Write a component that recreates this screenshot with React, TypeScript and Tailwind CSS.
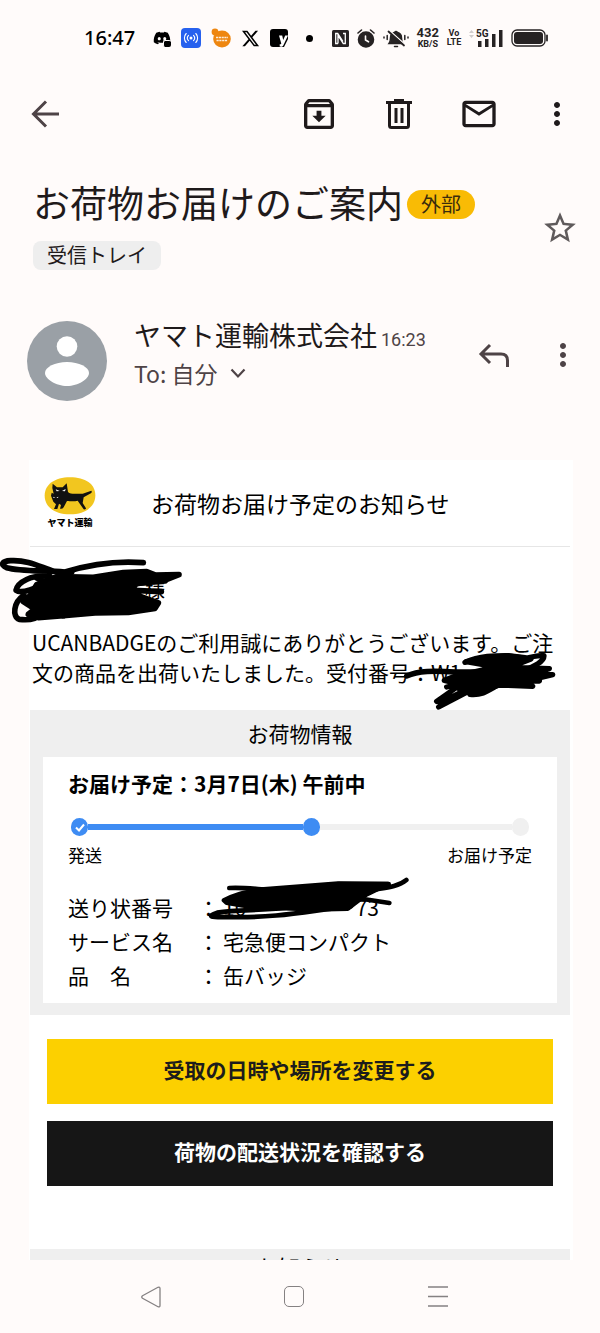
import { MdOutlineArchive, MdMailOutline, MdMoreVert, MdStarBorder } from "react-icons/md";
import { FaDiscord, FaXTwitter } from "react-icons/fa6";

const shipment = [
  { label: "サービス名", value: "宅急便コンパクト" },
  { label: "品　名", value: "缶バッジ" },
];

function StatusBar() {
  return (
    <div className="h-[76px] shrink-0 flex items-center justify-between pl-[84px] pr-[51px] text-black">
      <div className="flex items-center gap-[10px]">
        <span className="text-[20px] leading-6 font-medium font-['Noto_Sans'] mr-2">16:47</span>
        <span className="relative">
          <FaDiscord className="w-[18px] h-[18px]" />
          <span className="absolute right-0 bottom-0 w-2 h-[7px] bg-black border-l border-t border-[#fffbfa] rounded-[2px]" />
        </span>
        <svg className="w-5 h-5" viewBox="0 0 20 20" fill="none" stroke="#fff" strokeLinecap="round">
          <rect width="20" height="20" rx="4" fill="#2761ee" stroke="none" />
          <circle cx="10" cy="10" r="1.5" fill="#fff" stroke="none" />
          <path d="M7.5 7.3a4 4 0 0 0 0 5.4M12.5 7.3a4 4 0 0 1 0 5.4M5.2 5.5a6.5 6.5 0 0 0 0 9M14.8 5.5a6.5 6.5 0 0 1 0 9" strokeWidth="1.1" />
        </svg>
        <svg className="w-5 h-5" viewBox="0 0 20 20" fill="#ee8610">
          <circle cx="4" cy="4" r="3.4" />
          <ellipse cx="11" cy="11" rx="8.8" ry="8.4" />
          <path d="M5 9.5h12M5.500 12.500h11" stroke="#fff" strokeWidth="1.5" strokeDasharray="2.200 .6" fill="none" opacity=".85" />
        </svg>
        <FaXTwitter className="w-[19px] h-[19px]" />
        <svg className="w-[18px] h-[18px]" viewBox="0 0 18 18">
          <path d="M3 0h12a3 3 0 0 1 3 3v7l-4 8H3a3 3 0 0 1-3-3V3a3 3 0 0 1 3-3z" />
          <path d="M9 6.500h3.200l1 4.500 2-4.500H18l-4.600 9.700c-.8 1.500-2 1.800-3.700 1.400v-2.400c1.200.2 1.600-.2 1.500-1z" fill="#fff" />
        </svg>
      </div>
      <span className="w-[7px] h-[7px] rounded-full bg-black" />
      <div className="flex items-center gap-2 text-[#262223]">
        <svg className="w-[17px] h-[17px]" viewBox="0 0 17 17">
          <rect width="17" height="17" rx="1.500" fill="currentColor" />
          <path d="M6 13.500H3.700V3.500h2l5.300 8M11 3.500h2.300v10h-2L6 5.500v8" fill="none" stroke="#fff" strokeWidth="1.300" />
        </svg>
        <svg className="w-[18px] h-[19px]" viewBox="0 0 18 19" fill="none" stroke="currentColor" strokeWidth="1.600" strokeLinecap="round">
          <circle cx="9" cy="10.500" r="7.500" fill="currentColor" />
          <path d="M1 4l3.500-3M17 4l-3.500-3" />
          <path d="M8.500 7v4l3 1.800" stroke="#fffbfa" />
        </svg>
        <svg className="w-[26px] h-[19px]" viewBox="0 0 26 19" fill="none" stroke="currentColor" strokeWidth="1.500" strokeLinecap="round">
          <path d="M6 14.500c1.500-2 1.500-3 1.500-5.500 0-3 1.800-5 4.300-5.700a1.300 1.300 0 0 1 2.400 0C16.700 4 18.500 6 18.500 9c0 2.500 0 3.500 1.500 5.500z" fill="currentColor" />
          <path d="M11.500 17.500h3M4.200 6.500v4M1 8v1M21.800 6.500v4M25 8v1" />
          <path d="M7 2l14.500 13" stroke="#fffbfa" strokeWidth="1.500" />
          <path d="M5.500 2.500l15.500 14" strokeWidth="1.800" />
        </svg>
        <span className="flex flex-col items-center font-[Roboto] font-bold">
          <span className="text-[13px] leading-3">432</span>
          <span className="text-[9px] leading-[10px]">KB/S</span>
        </span>
        <span className="flex flex-col items-center font-[Roboto] font-bold text-[9px] leading-[9px] w-[14px]">
          <span>Vo</span>
          <span>LTE</span>
        </span>
        <svg className="w-[34px] h-5" viewBox="0 0 34 20" fill="currentColor">
          <path d="M0 5l2.500-3L5 5zM0 7l2.500 3L5 7z" fill="#d0cccc" />
          <text x="7" y="9" fontSize="10" fontWeight="700" fontFamily="Roboto">5G</text>
          <path d="M9 13h3.500v6H9zM16 11h3.500v8H16zM23 6h3.500v13H23zM30 2h3.500v17H30z" />
        </svg>
        <svg className="w-[38px] h-[18px]" viewBox="0 0 38 18">
          <rect x="1" y="1" width="33" height="16" rx="5" fill="none" stroke="currentColor" strokeWidth="1.300" />
          <rect x="3" y="3" width="29" height="12" rx="3" fill="currentColor" />
          <path d="M36 6.500v5" stroke="currentColor" strokeWidth="1.800" strokeLinecap="round" />
        </svg>
      </div>
    </div>
  );
}

function Toolbar() {
  return (
    <header className="h-[76px] shrink-0 flex items-center justify-between pl-[30px] pr-[25px] text-[#1f1a1b]">
      <button aria-label="戻る" className="text-[#4e4346]">
        <svg className="w-8 h-8" viewBox="0 0 32 32" fill="none" stroke="currentColor" strokeWidth="3">
          <path d="M29 16H4.500M16 3.500L3.500 16 16 28.500" />
        </svg>
      </button>
      <div className="flex items-center gap-10">
        <button aria-label="アーカイブ">
          <MdOutlineArchive className="w-10 h-10" />
        </button>
        <button aria-label="削除">
          <svg className="w-10 h-10" viewBox="0 0 40 40" fill="none" stroke="currentColor" strokeWidth="3">
            <path d="M7 8.500h26M15 6.500h10" />
            <path d="M10.500 9v22.500a2 2 0 0 0 2 2h15a2 2 0 0 0 2-2V9M17 14v15M23 14v15" />
          </svg>
        </button>
        <button aria-label="未読にする">
          <MdMailOutline className="w-10 h-10" />
        </button>
        <button aria-label="その他">
          <MdMoreVert className="w-9 h-10" />
        </button>
      </div>
    </header>
  );
}

function Subject() {
  return (
    <div className="flex items-center justify-between pt-[26px] pl-[33px] pr-[21px]">
      <div>
        <div className="flex items-center gap-1">
          <h1 className="text-[37px] leading-[48px] pb-1 text-[#1f1a1b]">お荷物お届けのご案内</h1>
          <span className="h-[29px] px-[14px] rounded-full bg-[#f9bb05] text-[20px] leading-[27px] text-[#3b2c0c]">外部</span>
        </div>
        <span className="mt-[11px] h-[29px] w-fit px-[14px] rounded-lg bg-[#eeeeee] text-[20px] leading-[27px] text-[#1f1a1b] block">受信トレイ</span>
      </div>
      <button aria-label="スター" className="text-[#5f5a5b] mt-[8px]">
        <MdStarBorder className="w-[38px] h-[38px]" />
      </button>
    </div>
  );
}

function Sender() {
  return (
    <div className="flex items-center pt-[46px] pl-[27px] pr-[19px]">
      <svg className="w-20 h-20 mt-[4px] shrink-0" viewBox="0 0 80 80">
        <circle cx="40" cy="40" r="40" fill="#9aa0a6" />
        <circle cx="40" cy="25.500" r="10.300" fill="#fff" />
        <path d="M18 52c0-6 10-11 22-11s22 5 22 11-11 13-22 13-22-7-22-13z" fill="#fff" />
      </svg>
      <div className="ml-[27px] mb-[10px] flex-1">
        <div className="flex items-baseline gap-1">
          <span className="text-[27px] leading-[38px] text-[#1f1a1b]">ヤマト運輸株式会社</span>
          <span className="text-[18px] text-[#4e4346] font-[Roboto]">16:23</span>
        </div>
        <button className="flex items-center gap-3 text-[23px] leading-[38px] text-[#4e4346]">
          To: 自分
          <svg className="w-4 h-4" viewBox="0 0 16 16" fill="none" stroke="currentColor" strokeWidth="2.200">
            <path d="M1.500 4.500L8 11.500l6.500-7" />
          </svg>
        </button>
      </div>
      <button aria-label="返信" className="text-[#4e4346] mb-[9px]">
        <svg className="w-8 h-8" viewBox="0 0 32 32" fill="none" stroke="currentColor" strokeWidth="3">
          <path d="M12 6L3 15l9 9M3.500 15H23q6.500 0 6.500 6.500V28" />
        </svg>
      </button>
      <button aria-label="メッセージのその他" className="text-[#4e4346] mb-[9px] ml-[35px]">
        <MdMoreVert className="w-9 h-10" />
      </button>
    </div>
  );
}

function YamatoLogo() {
  return (
    <div className="w-[52px] flex flex-col items-center">
      <svg className="w-[52px] h-[38px]" viewBox="0 0 156 114">
        <path d="M78 1c46 0 76 20 76 54s-30 57-76 57S2 89 2 56 32 1 78 1z" fill="#f2c61f" />
        <path d="M26 20l13 11h17l12-12 4 26c8 8 22 5 44 5l26-9q3 2 0 7l-23 13-3 17 10 16q1 4-7 3l-18-26c-12 4-24 1-32 1L59 91q-4 6-11 4l3-11-6-4-5 16H30l6-14-8-8-7-18 2-9 6 3-4-17z" fill="#111" />
        <path d="M35 37l12 5-9 1zM65 36l-11 6 9 1zM27 59l7 3-5 1zM43 59l-6 3 5 1z" fill="#fff" />
      </svg>
      <span className="mt-[2px] text-[9px] leading-3 font-black text-black">ヤマト運輸</span>
    </div>
  );
}

function NameScribble() {
  return (
    <svg className="absolute -left-[30px] top-0 w-[220px] h-[85px]" viewBox="0 0 660 255" fill="none" stroke="#000" strokeWidth="17" strokeLinecap="round" strokeLinejoin="round">
      <path d="M430 47C340 40 260 55 195 75 120 70 60 73 20 62 0 53 6 42 32 41c55-3 90 20 130 32" />
      <path d="M150 89C95 80 52 107 48 130c16 12 60-5 105-30M72 145C40 165 36 209 58 217c42 6 60-10 70-18" />
      <path d="M110 113L170 89l110 2 90-14 70-3 25 10 72-1-38 15-90 12-14 18 30 22 50 18-10 16-80 12-100 2-95 8-75 6-30-10 20-16-35-22 20-18z" fill="#000" />
      <path d="M110 93l40 18M400 130l84 4M190 202v4M215 75l-40 16M400 110l95-8" />
    </svg>
  );
}

function NumberScribble() {
  return (
    <svg className="absolute -top-[6px] left-[370px] w-[180px] h-[100px]" viewBox="0 0 540 300" fill="none" stroke="#000" strokeWidth="16" strokeLinecap="round" strokeLinejoin="round">
      <path d="M20 165c35-16 80-16 145-12h60M195 124c45-20 90-20 130-20l50 6M325 124c35 2 65-24 107-20 0 22-40 36-70 48" />
      <path d="M198 122l120-18 75 10-60 23-75-5zM165 166l120-28 75 2 88 3-40 12 50 6-50 12 10 7-70-4 50 20-100-4-60 20-50 2-30-30-25-6z" fill="#000" />
      <path d="M190 185l-80 56c15 4 60-18 90-38M116 258l105-55 80-15M140 198l80-18M210 220c40 4 60-15 85-28" />
    </svg>
  );
}

function SlipScribble() {
  return (
    <svg className="absolute -left-[18px] -top-[16px] w-[205px] h-[50px]" viewBox="495 20 615 150" fill="none" stroke="#000" strokeWidth="14" strokeLinecap="round" strokeLinejoin="round">
      <path d="M1099 38c-22 18-52 22-90 28M568 62c70-4 130 14 190 2l140-14h148" />
      <path d="M552 99c45-22 60-22 110-32l232-18 150 1-66 32-55 42-100 2-140-6-75-6-48-8z" fill="#000" />
      <path d="M780 116c-100 16-180 9-248 20-35 12-20 14 30 13 160 4 250-20 370-32M950 92l98 15" />
    </svg>
  );
}

function DeliveryInfo() {
  return (
    <section className="bg-[#efefef] px-[13px] pb-3 text-black">
      <h3 className="text-[21px] leading-[47px] text-center">お荷物情報</h3>
      <div className="bg-white px-[25px] pt-[11px] pb-[11px]">
        <p className="text-[21px] leading-[31px] font-bold">お届け予定：3月7日(木) 午前中</p>
        <div className="mt-[19px] flex items-center px-[3px]">
          <span className="w-[17px] h-[18px] rounded-full bg-[#3e8cf3] flex items-center justify-center">
            <svg className="w-3 h-3" viewBox="0 0 12 12" fill="none" stroke="#fff" strokeWidth="2">
              <path d="M2 6.500l3 3 5-6" />
            </svg>
          </span>
          <span className="h-[6px] flex-[215] bg-[#3e8cf3]" />
          <span className="w-[17px] h-[18px] rounded-full bg-[#3e8cf3]" />
          <span className="h-[6px] flex-[192] bg-[#f0f0f0]" />
          <span className="w-[17px] h-[18px] rounded-full bg-[#f0f0f0]" />
        </div>
        <div className="mt-1 flex justify-between text-[17px] leading-[30px]">
          <span>発送</span>
          <span>お届け予定</span>
        </div>
        <table className="mt-5 text-[21px] leading-[34px]">
          <tbody>
            <tr>
              <th className="w-[130px] p-0 text-left font-normal">送り状番号</th>
              <td className="w-[25px] p-0">：</td>
              <td className="p-0">
                <span className="relative flex justify-between w-[156px]">
                  <span>10</span>
                  <span>73</span>
                  <SlipScribble />
                </span>
              </td>
            </tr>
            {shipment.map((row) => (
              <tr key={row.label}>
                <th className="p-0 text-left font-normal">{row.label}</th>
                <td className="p-0">：</td>
                <td className="p-0">{row.value}</td>
              </tr>
            ))}
          </tbody>
        </table>
      </div>
    </section>
  );
}

function MailBody() {
  return (
    <article className="mt-[58px] ml-[29px] mr-[27px] pl-px pr-[3px] bg-white text-black">
      <div className="h-[87px] flex items-center border-b border-[#e6e6e6] pl-[14px]">
        <YamatoLogo />
        <h2 className="ml-[55px] text-[23px] leading-8">お荷物お届け予定のお知らせ</h2>
      </div>

      <div className="relative h-[84px] pt-[28px] pl-[115px] text-[20px] leading-[30px]">
        様
        <NameScribble />
      </div>

      <div className="relative h-[79px] text-[21px] leading-[30px] pl-[2px] -mt-[4px]">
        <p>UCANBADGEのご利用誠にありがとうございます。ご注文の商品を出荷いたしました。受付番号：W1</p>
        <NumberScribble />
      </div>

      <div className="mt-1">
        <DeliveryInfo />
      </div>

      <div className="flex flex-col gap-[17px] px-[17px] pt-6 pb-[63px] text-[21px] leading-[60px] font-bold text-center">
        <a href="#change" className="pb-[5px] bg-[#fcd000] text-[#1c1c1c]">受取の日時や場所を変更する</a>
        <a href="#status" className="pb-[5px] bg-[#161616] text-white">荷物の配送状況を確認する</a>
      </div>

      <section className="bg-[#efefef] pt-[3px]">
        <h3 className="text-[22px] leading-7 text-center">お知らせ</h3>
      </section>
    </article>
  );
}

function NavBar() {
  return (
    <nav className="h-[73px] shrink-0 grid grid-cols-3 items-center justify-items-center pl-[79px] pr-[90px] text-[#858182]">
      <button aria-label="戻る">
        <svg className="w-5 h-[22px]" viewBox="0 0 20 22" fill="none" stroke="currentColor" strokeWidth="1.300">
          <path d="M1.500 9.800L17 1.300q2-.8 2 1.200v17q0 2-2 1.200L1.500 12.200q-1.500-1.200 0-2.400z" />
        </svg>
      </button>
      <button aria-label="ホーム">
        <span className="block w-5 h-[21px] rounded-[5px] border border-[#858182]" />
      </button>
      <button aria-label="履歴">
        <svg className="w-5 h-[21px]" viewBox="0 0 20 21" stroke="currentColor" strokeWidth="1.300">
          <path d="M0 1h20M0 10.500h20M0 20h20" />
        </svg>
      </button>
    </nav>
  );
}

export default function App() {
  return (
    <div lang="ja" className="h-screen flex flex-col bg-[#fffbfa] font-['Noto_Sans_CJK_JP',sans-serif]">
      <StatusBar />
      <Toolbar />
      <main className="flex-1 min-h-0 overflow-hidden">
        <Subject />
        <Sender />
        <MailBody />
      </main>
      <NavBar />
    </div>
  );
}
